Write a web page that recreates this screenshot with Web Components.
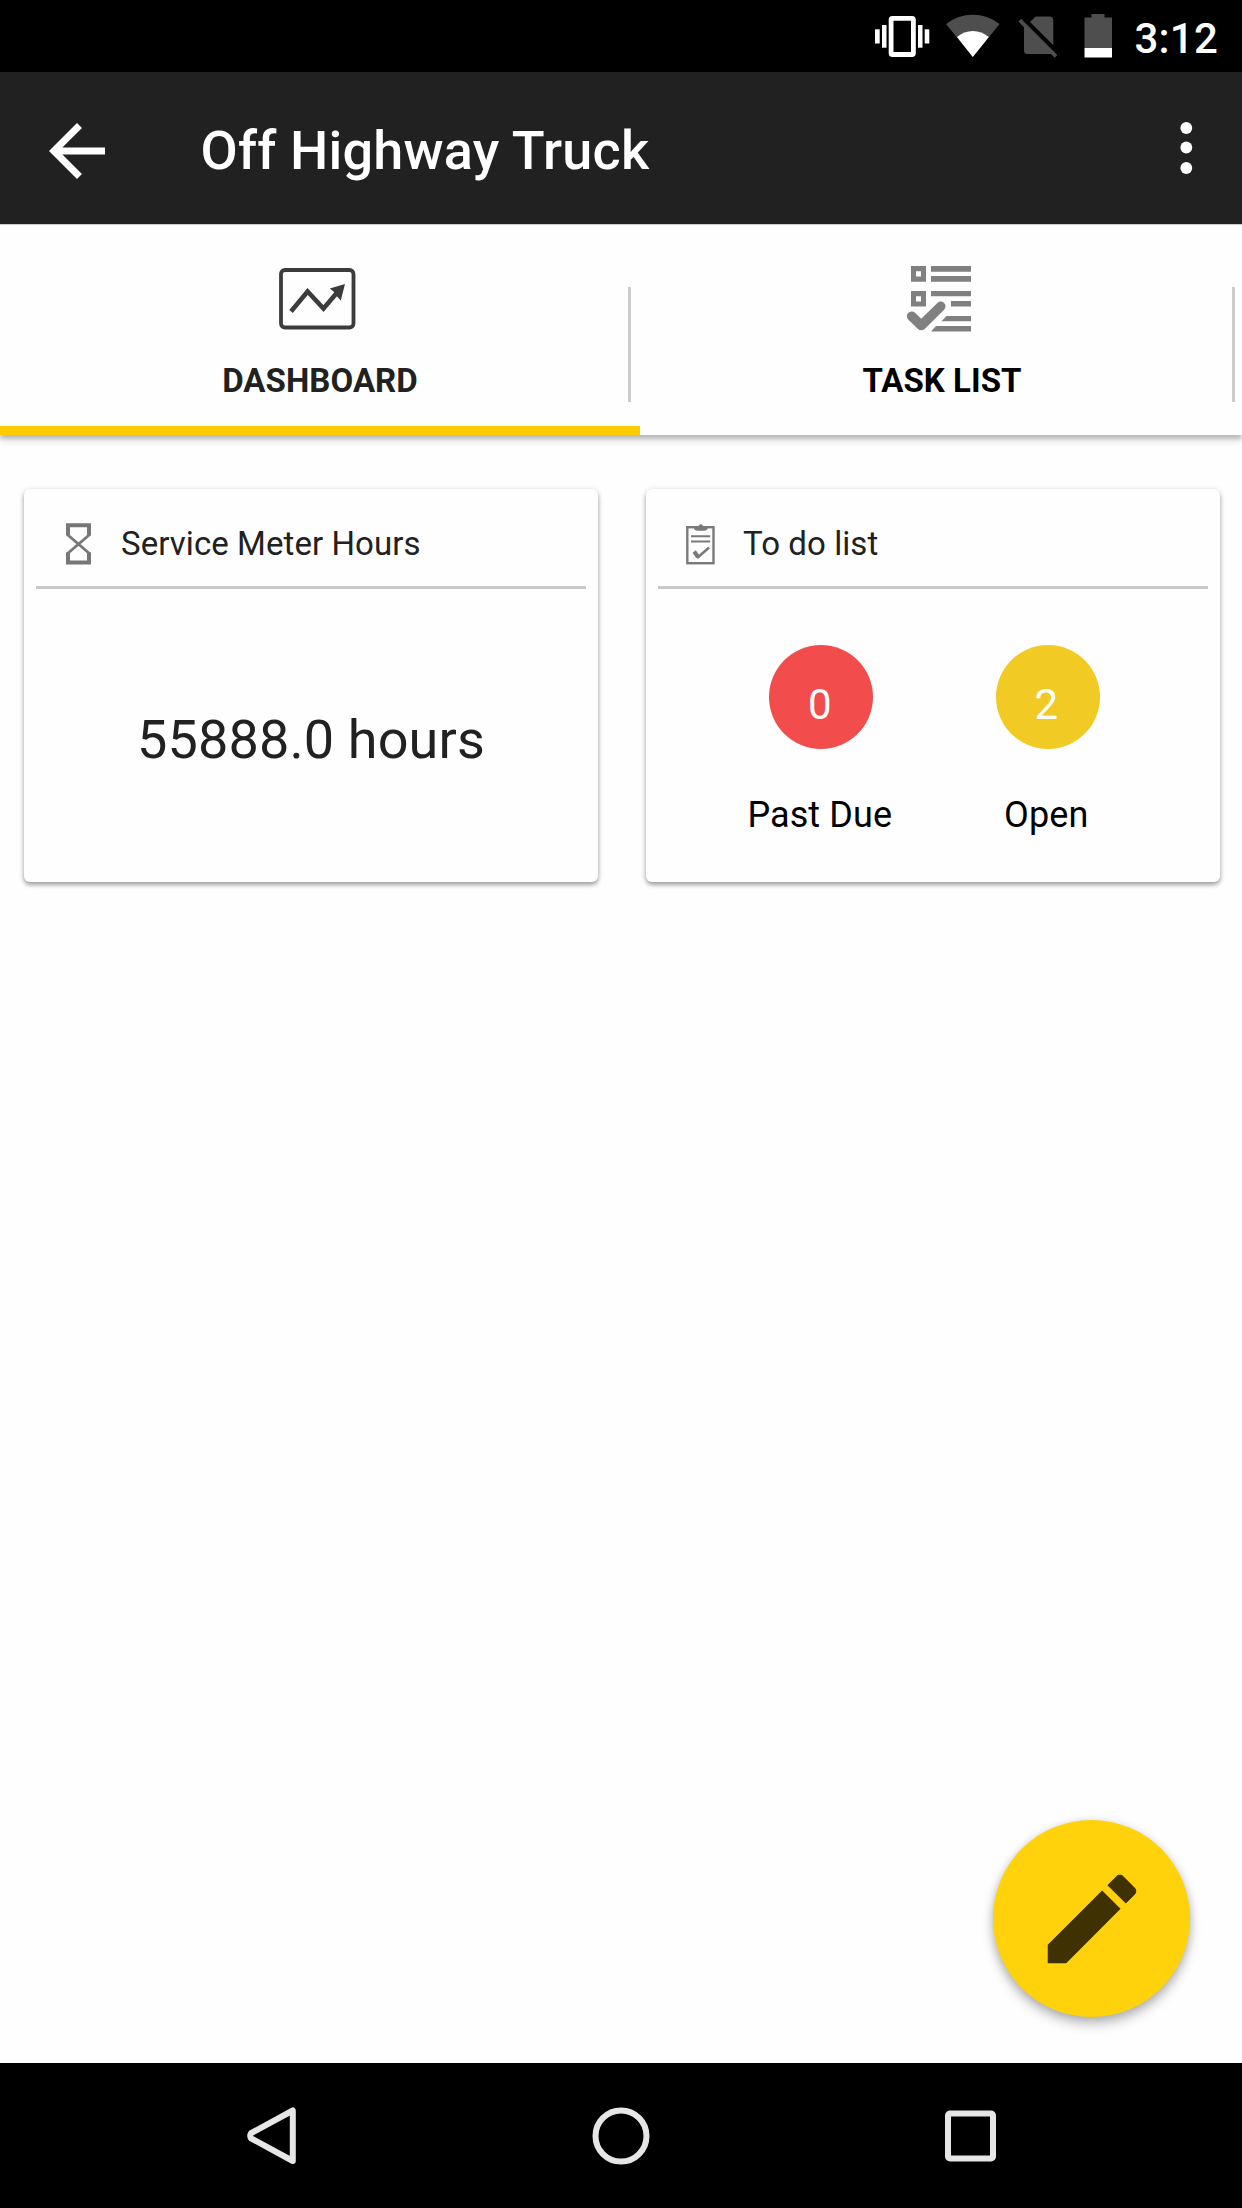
<!DOCTYPE html>
<html lang="en">
<head>
<meta charset="utf-8">
<title>Off Highway Truck</title>
<style>
html,body{margin:0;padding:0}
body{width:1242px;height:2208px;overflow:hidden;background:#fefefe;font-family:Roboto,"Liberation Sans",sans-serif;color:#212121}
</style>
</head>
<body>
<truck-app></truck-app>
<script>
const define = (name, html) => {
  const t = document.createElement('template');
  t.innerHTML = html;
  customElements.define(name, class extends HTMLElement {
    constructor() {
      super();
      this.attachShadow({ mode: 'open' }).appendChild(t.content.cloneNode(true));
    }
  });
};

define('status-bar', `
<style>
:host{display:flex;justify-content:flex-end;height:72px;background:#000;color:#fff}
svg{display:block;flex:none}
.time{font-size:42px;font-weight:500;line-height:78px;width:107.5px;letter-spacing:.2px;white-space:nowrap}
</style>
<svg width="268.5" height="72" viewBox="866 0 268.5 72">
  <g fill="#fff">
    <rect x="875" y="29.3" width="4.7" height="14.2"/><rect x="882" y="25" width="4.5" height="22.7"/>
    <rect x="918" y="25" width="4.5" height="22.7"/><rect x="924.7" y="29.3" width="4.6" height="14.2"/>
    <path fill-rule="evenodd" d="M892.5 16h19.5a3.8 3.8 0 0 1 3.8 3.8v33.4a3.8 3.8 0 0 1-3.8 3.8h-19.5a3.8 3.8 0 0 1-3.8-3.8v-33.4a3.8 3.8 0 0 1 3.8-3.8zM893.5 20.7v31.3h17.5v-31.3z"/>
  </g>
  <path fill="#4e4e4e" d="M946 24Q958 14.7 972.8 14.7T999.600 24L972.8 57z"/>
  <path fill="#fff" d="M957 37Q964 31 972.8 31T988.8 37L972.8 57z"/>
  <path fill="#4e4e4e" d="M1024 24.500L1053.500 54H1027.500Q1024 54 1024 50.500zM1030 22L1034.500 17.500Q1035.500 16.600 1037 16.600H1049.500Q1053.300 16.600 1053.300 20.400V45.300z"/>
  <path stroke="#4e4e4e" stroke-width="3.8" d="M1019.700 20.200L1056 56.400"/>
  <path fill="#4e4e4e" d="M1084.500 17.500h7v-3.500h13v3.500h7.500v30.500h-27.500z"/>
  <rect x="1084.500" y="48" width="27.500" height="9.500" fill="#fff"/>
</svg>
<span class="time">3:12</span>`);

define('app-bar', `
<style>
:host{display:flex;align-items:center;height:152px;padding:5px 40px 0 35px;box-sizing:border-box;background:#212121;color:#fff}
svg{display:block;flex:none}
h1{margin:0 0 0 81.5px;flex:1;font-size:54px;font-weight:500;line-height:64px;letter-spacing:.2px;white-space:nowrap}
.more{margin-top:-5px}
</style>
<svg width="84" height="84" viewBox="0 0 24 24"><path fill="#fff" d="M20 11H7.830l5.590-5.590L12 4l-8 8 8 8 1.410-1.410L7.830 13H20v-2z"/></svg>
<h1><slot></slot></h1>
<svg class="more" width="32" height="60" viewBox="0 0 32 60" fill="#fff"><circle cx="16.300" cy="10" r="5.900"/><circle cx="16.300" cy="29.500" r="5.900"/><circle cx="16.300" cy="50" r="5.900"/></svg>`);

define('tab-item', `
<style>
:host{display:grid;height:209.5px;flex:none;box-sizing:border-box}
:host>*{grid-area:1/1}
.body{display:flex;flex-direction:column;align-items:center;padding-top:35px}
.icon{height:76px}
.label{font-size:33px;font-weight:700;line-height:40px;margin-top:25px;letter-spacing:.05px;white-space:nowrap}
.rule{justify-self:end;width:3px;height:115px;margin:62px 9px 0 0;background:#ccc}
.bar{align-self:end;height:9px;background:var(--bar,transparent)}
</style>
<div class="body"><div class="icon"><slot name="icon"></slot></div><div class="label"><slot></slot></div></div>
<div class="rule"></div><div class="bar"></div>`);

define('tab-strip', `
<style>
:host{display:flex;height:210.5px;box-sizing:border-box;border-top:1px solid #ccc;position:relative;background:#fefefe;box-shadow:0 4px 4px rgba(0,0,0,.19),0 6px 8px rgba(0,0,0,.1)}
.a{width:640px;--bar:#ffcc03}
.b{width:604px;color:#000}
svg{display:block}
</style>
<tab-item class="a">
  <svg slot="icon" width="82" height="76" viewBox="279 260 82 76">
    <rect x="281" y="270" width="72.500" height="57.500" rx="4" fill="none" stroke="#3c3c3c" stroke-width="3.800"/>
    <path d="M291 311.500L307.600 291.500L323.500 308.500L338 291.500" fill="none" stroke="#3c3c3c" stroke-width="4.600"/>
    <path fill="#3c3c3c" d="M345 284L329.800 288.500L333.500 291.500L337.500 297L340.800 300.500z"/>
  </svg>DASHBOARD</tab-item>
<tab-item class="b">
  <svg slot="icon" width="70" height="76" viewBox="907 260 70 76">
    <g fill="#808080">
      <path fill-rule="evenodd" d="M911 266h15v15.700h-15zM916 271.200v5.300h5v-5.300zM911 291h15v15.500h-15zM916 296.200v5.300h5v-5.300z"/>
      <path d="M931 266h40v5.700h-40zM931 276h40v5.700h-40zM931 291h40v5.300h-40zM951 301h20v5.500h-20zM946.500 316H971v5.300h-29.500zM936 326H971v5.500h-40z"/>
    </g>
    <path d="M911.700 316.300L921.300 325.500L940.700 306.300" fill="none" stroke="#808080" stroke-width="9.600" stroke-linecap="round" stroke-linejoin="round"/>
  </svg>TASK LIST</tab-item>`);

define('info-card', `
<style>
:host{display:flex;flex-direction:column;width:574px;height:392.5px;border-radius:6px;background:#fefefe;box-shadow:0 3px 4px rgba(0,0,0,.3),0 1px 6px rgba(0,0,0,.14)}
header{display:flex;align-items:center;height:96.5px;box-sizing:border-box;margin:0 12px;padding-top:13px}
.icon{width:85px;display:flex;justify-content:center}
h2{margin:0;font-size:33px;font-weight:400;line-height:40px;letter-spacing:.07px;white-space:nowrap}
.rule{height:3px;background:#c9c9c9;margin:0 12px}
.body{flex:1;display:flex;justify-content:center}
</style>
<header><div class="icon"><slot name="icon"></slot></div><h2><slot name="title"></slot></h2></header>
<div class="rule"></div>
<div class="body"><slot></slot></div>`);

define('count-badge', `
<style>
:host{display:flex;flex-direction:column;align-items:center;width:226.5px;color:#000}
.dot{width:104px;height:104px;border-radius:50%;background:var(--dot);color:#fff;font-size:42px;line-height:119px;text-align:center;text-indent:-3px}
.label{font-size:36px;line-height:42px;margin-top:45px;white-space:nowrap;margin-left:-3px;letter-spacing:.1px}
</style>
<div class="dot"><slot name="count"></slot></div>
<div class="label"><slot></slot></div>`);

define('edit-fab', `
<style>
:host{display:flex;align-items:center;justify-content:center;width:196.5px;height:196.5px;border-radius:50%;background:#ffd20b;box-shadow:0 7px 12px rgba(0,0,0,.25),0 1px 8px rgba(0,0,0,.13)}
svg{display:block;margin:1px 0 0 1px}
</style>
<svg width="118" height="118" viewBox="0 0 24 24"><path fill="#3f3102" d="M3 17.250V21h3.750L17.810 9.940l-3.750-3.750L3 17.250zM20.710 7.040c.39-.39.39-1.020 0-1.410l-2.340-2.340c-.39-.39-1.020-.39-1.410 0l-1.830 1.830 3.750 3.750 1.830-1.830z"/></svg>`);

define('nav-bar', `
<style>
:host{display:flex;justify-content:space-between;align-items:center;height:145px;box-sizing:border-box;padding:0 241px;background:#000}
svg{display:block}
</style>
<svg width="60" height="64" viewBox="240.500 2104 60 64"><path d="M292.300 2110.500V2161L250.500 2138.300Q249 2135.700 250.500 2133.200z" fill="none" stroke="#e6e6e6" stroke-width="6" stroke-linejoin="round"/></svg>
<svg width="64" height="64" viewBox="-32 -32 64 64"><circle r="25.500" fill="none" stroke="#e6e6e6" stroke-width="6"/></svg>
<svg width="60" height="64" viewBox="-30 -32 60 64"><rect x="-23" y="-22.500" width="45" height="45" rx="2" fill="none" stroke="#e6e6e6" stroke-width="6"/></svg>`);

define('truck-app', `
<style>
:host{display:flex;flex-direction:column;width:1242px;height:2208px;position:relative;overflow:hidden;background:#fefefe}
main{flex:1;display:flex;align-items:flex-start;gap:48px;padding:54.5px 22px 0 24px}
.hours{font-size:54px;line-height:64px;margin-top:119px;letter-spacing:.12px;white-space:nowrap}
.badges{display:flex;margin:56.5px 0 0 3px}
.red{--dot:#f24c4c}
.yel{--dot:#f1ca24}
svg{display:block}
edit-fab{position:absolute;left:993px;top:1820px}
</style>
<status-bar></status-bar>
<app-bar>Off Highway Truck</app-bar>
<tab-strip></tab-strip>
<main>
  <info-card>
    <svg slot="icon" width="25" height="42" viewBox="0 0 25 42" fill="none" stroke="#777">
      <path d="M2 12.500V2.200H23V12.500M2 29.500V39.500H23V29.500" stroke-width="4"/>
      <path d="M1.300 11.500L23.700 30.700M23.700 11.500L1.300 30.700" stroke-width="2.800"/>
    </svg>
    <span slot="title">Service Meter Hours</span>
    <div class="hours">55888.0 hours</div>
  </info-card>
  <info-card>
    <svg slot="icon" width="29" height="42" viewBox="0 0 29 42">
      <rect x="1.300" y="4.200" width="26.200" height="36" fill="none" stroke="#7a7a7a" stroke-width="2.400"/>
      <path fill="#7a7a7a" d="M8 3.500h3.500q1 0 1.300-1a2.300 2.300 0 0 1 4 0q.3 1 1.300 1h3.500v2.700q-2 1.600-4 1.600h-5.600q-2 0-4-1.600z"/>
      <path d="M5 13.200h19.200M5 18.500h19.200" stroke="#7a7a7a" stroke-width="2"/>
      <path d="M8.200 28.500L12 34" stroke="#7a7a7a" stroke-width="4"/><path d="M11.100 35L23.100 24.500" stroke="#7a7a7a" stroke-width="2.600"/>
    </svg>
    <span slot="title">To do list</span>
    <div class="badges">
      <count-badge class="red"><span slot="count">0</span>Past Due</count-badge>
      <count-badge class="yel"><span slot="count">2</span>Open</count-badge>
    </div>
  </info-card>
</main>
<nav-bar></nav-bar>
<edit-fab></edit-fab>`);
</script>
</body>
</html>
